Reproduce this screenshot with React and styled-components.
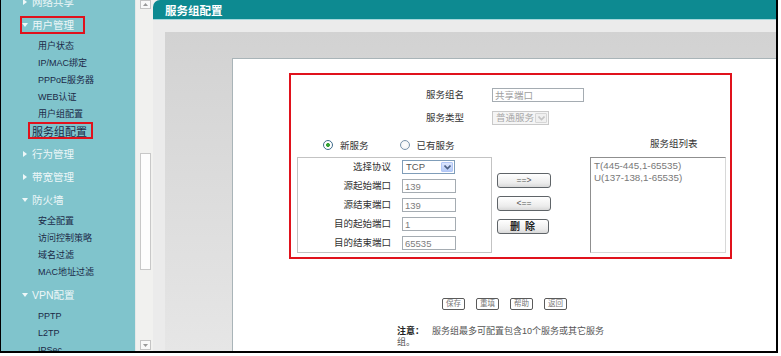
import React from 'react';
import styled, { createGlobalStyle } from 'styled-components';

const GlobalStyle = createGlobalStyle`
  html, body { margin: 0; padding: 0; background: #fff; }
  body { font-family: "Liberation Sans", "Noto Sans CJK SC", sans-serif; }
  * { box-sizing: border-box; }
`;

const RED = '#e0121c';

const Frame = styled.div`
  display: flex;
  width: 778px;
  height: 353px;
  border-left: 1px solid #000;
  border-right: 2px solid #000;
  border-bottom: 2px solid #000;
  overflow: hidden;
`;

/* ---------- sidebar ---------- */

const Sidebar = styled.nav`
  width: 134px;
  flex: none;
  background: #80c4cc;
  overflow: hidden;
`;

const MenuList = styled.div`
  margin-top: -10px;
`;

const GroupTitle = styled.div`
  height: 23px;
  display: flex;
  align-items: center;
  padding-left: 19px;
`;

const TitleBox = styled.span`
  display: inline-flex;
  align-items: center;
  height: 18px;
  padding: 0 9px 0 0;
  border: 2px solid ${p => (p.$marked ? RED : 'transparent')};
  color: #eef7f8;
  font-size: 10.5px;
  white-space: nowrap;
`;

const ArrowSlot = styled.span`
  width: 6px;
  margin-right: 4px;
  display: inline-flex;
  justify-content: center;
`;

const SubList = styled.div`
  padding: 1px 0 3px;
`;

const SubItem = styled.div`
  height: 17px;
  display: flex;
  align-items: center;
  padding-left: ${p => (p.$marked ? 27 : 37)}px;
`;

const SubLabel = styled.span`
  display: inline-flex;
  align-items: center;
  color: #1b2947;
  white-space: nowrap;
  font-size: ${p => (p.$marked ? 11 : 9)}px;
  height: ${p => (p.$marked ? '17px' : 'auto')};
  padding: ${p => (p.$marked ? '0 4px 0 2px' : '0')};
  border: ${p => (p.$marked ? `2px solid ${RED}` : 'none')};
`;

const Arrow = ({ open }) =>
  open ? (
    <svg width="6" height="4" viewBox="0 0 6 4"><path d="M0 0H6L3 4Z" fill="#eef7f8" /></svg>
  ) : (
    <svg width="4" height="6" viewBox="0 0 4 6"><path d="M0 0L4 3L0 6Z" fill="#eef7f8" /></svg>
  );

const menu = [
  { title: '网络共享', items: [] },
  { title: '用户管理', open: true, marked: true, items: ['用户状态', 'IP/MAC绑定', 'PPPoE服务器', 'WEB认证', '用户组配置', '服务组配置'] },
  { title: '行为管理', items: [] },
  { title: '带宽管理', items: [] },
  { title: '防火墙', open: true, items: ['安全配置', '访问控制策略', '域名过滤', 'MAC地址过滤'] },
  { title: 'VPN配置', open: true, items: ['PPTP', 'L2TP', 'IPSec'] },
];

/* ---------- scrollbar ---------- */

const ScrollTrack = styled.div`
  width: 18px;
  flex: none;
  background: #f1f1ef;
  border-left: 1px solid #e4e8e8;
  display: flex;
  flex-direction: column;
  padding-left: 4px;
`;

const ScrollBtn = styled.div`
  width: 11px;
  height: ${p => p.$h}px;
  border: 1px solid #c4c4c4;
  background: #f9f9f9;
  display: flex;
  align-items: center;
  justify-content: center;
  margin-top: ${p => (p.$bottom ? 'auto' : '0')};
  margin-bottom: ${p => (p.$bottom ? '1px' : '0')};
`;

const Thumb = styled.div`
  width: 11px;
  height: 117px;
  margin-top: 144px;
  border: 1px solid #c8c8c8;
  background: #fdfdfd;
`;

/* ---------- main ---------- */

const Main = styled.main`
  flex: 1;
  display: flex;
  flex-direction: column;
  background: #f1f1ef;
  min-width: 0;
`;

const TitleBar = styled.header`
  height: 20px;
  flex: none;
  background: #0d8a91;
  border-top-left-radius: 7px;
  border-bottom: 1px solid #a6d8dc;
  display: flex;
  align-items: center;
  padding-left: 12px;
  color: #fff;
  font-weight: bold;
  font-size: 11.5px;
`;

const Body = styled.div`
  flex: 1;
  display: flex;
  background: #ebebeb;
  padding: 12px 0 0 12px;
`;

const Inset = styled.div`
  flex: 1;
  display: flex;
  background: linear-gradient(#d2d2d2, #e6e6e6);
  padding: 26px 0 0 67px;
`;

const Content = styled.section`
  flex: 1;
  background: #fff;
  border-top: 1px solid #a9b4b8;
  border-left: 1px solid #a9b4b8;
  display: flex;
  flex-direction: column;
`;

const RedBox = styled.div`
  margin: 14px 0 0 56px;
  width: 443px;
  height: 186px;
  border: 2px solid ${RED};
  flex: none;
`;

const TopGrid = styled.div`
  display: grid;
  grid-template-columns: 173px auto;
  column-gap: 28px;
  row-gap: 9px;
  padding-top: 13px;
  justify-content: start;
`;

const Label = styled.span`
  font-size: 9.5px;
  color: #333;
  line-height: 14px;
  text-align: ${p => p.$align || 'right'};
  white-space: nowrap;
`;

const TextBox = styled.input`
  width: ${p => p.$w}px;
  height: 14px;
  border: 1px solid #a5acb2;
  padding: 0 2px;
  margin: 0;
  font: 9.5px "Liberation Sans", "Noto Sans CJK SC", sans-serif;
  color: ${p => p.$faint ? '#a0a0a0' : '#7d7d7d'};
  background: #fff;
  outline: none;
`;

const SelectBox = styled.div`
  width: ${p => p.$w}px;
  height: ${p => p.$h || 14}px;
  border: 1px solid ${p => (p.$disabled ? '#c9c9c9' : '#7f9db9')};
  background: ${p => (p.$disabled ? '#f5f5f5' : '#fff')};
  display: flex;
  align-items: stretch;
  font-size: 9.5px;
  color: ${p => (p.$disabled ? '#a8a8a8' : '#555')};
`;

const SelectText = styled.span`
  flex: 1;
  padding-left: 3px;
  line-height: 12px;
  white-space: nowrap;
  overflow: hidden;
`;

const SelectArrow = styled.span`
  width: 12px;
  flex: none;
  margin: 1px;
  display: flex;
  align-items: center;
  justify-content: center;
  border: 1px solid ${p => (p.$disabled ? '#d6d6d6' : '#b1c6f6')};
  background: ${p => (p.$disabled ? '#f0f0f0' : 'linear-gradient(#dce6fd, #b6cbf8)')};
  border-radius: 1px;
`;

const Chevron = ({ color }) => (
  <svg width="7" height="5" viewBox="0 0 7 5">
    <path d="M0.5 0.5L3.5 3.5L6.5 0.5" fill="none" stroke={color} strokeWidth="1.6" />
  </svg>
);

const Lower = styled.div`
  display: flex;
  margin-top: 13px;
`;

const LeftCol = styled.div`
  margin-left: 6px;
  width: 195px;
  flex: none;
`;

const RadioRow = styled.div`
  height: 14px;
  display: flex;
  align-items: center;
  padding-left: 26px;
`;

const Radio = styled.span`
  width: 10px;
  height: 10px;
  border-radius: 50%;
  border: 1px solid ${p => (p.$on ? '#3f6c8c' : '#7a93ab')};
  background: radial-gradient(circle, ${p => (p.$on ? '#37a437 0 1.8px, #fff 2.2px' : '#fff 0, #eef0f2 100%')});
  margin-right: 7px;
  flex: none;
`;

const RadioText = styled.span`
  font-size: 9.5px;
  color: #333;
  margin-right: ${p => p.$gap || 0}px;
  white-space: nowrap;
`;

const FieldSet = styled.div`
  margin-top: 5px;
  height: 96px;
  border: 1px solid #c3c3c3;
  padding-top: 2px;
  display: grid;
  grid-template-columns: 93px auto;
  column-gap: 11px;
  row-gap: 5px;
  grid-auto-rows: 14px;
  justify-content: start;
`;

const BtnCol = styled.div`
  margin-left: 5px;
  width: 54px;
  flex: none;
  padding-top: 35px;
  display: flex;
  flex-direction: column;
  gap: 8px;
`;

const XpButton = styled.button`
  width: ${p => p.$w || 54}px;
  height: 15px;
  margin: 0;
  padding: 0;
  border: 1px solid #5f6468;
  border-radius: 3px;
  background: linear-gradient(#ffffff, #ececec 70%, #d8d8d8);
  font: ${p => (p.$bold ? 'bold 10px' : '8.5px')} "Liberation Sans", "Noto Sans CJK SC", sans-serif;
  color: ${p => (p.$bold ? '#222' : '#555')};
  line-height: 13px;
  letter-spacing: ${p => (p.$bold ? '1px' : '0')};
`;

const RightCol = styled.div`
  margin-left: 39px;
  width: 136px;
  flex: none;
`;

const ListTitle = styled.div`
  height: 14px;
  line-height: 12px;
  padding-left: 60px;
  font-size: 9.5px;
  color: #333;
`;

const ListBox = styled.div`
  margin-top: 5px;
  height: 96px;
  border: 1px solid #d8d8d8;
  border-top-color: #8f8f8f;
  border-left-color: #8f8f8f;
  padding: 2px 3px;
  font-size: 9.8px;
  line-height: 11.5px;
  color: #787878;
`;

const Actions = styled.div`
  display: flex;
  gap: 11px;
  margin: 39px 0 0 209px;
`;

const SmallBtn = styled.button`
  width: 23px;
  height: 12px;
  margin: 0;
  padding: 0;
  border: 1px solid #5a5a5a;
  border-radius: 2px;
  background: #fff;
  font: 7.5px "Liberation Sans", "Noto Sans CJK SC", sans-serif;
  color: #777;
  line-height: 10px;
`;

const Note = styled.p`
  margin: 16px 0 0 164px;
  width: 210px;
  font-size: 9px;
  line-height: 10.5px;
  color: #555;
`;

const NoteHead = styled.b`
  color: #222;
  margin-right: 8px;
`;

export default function App() {
  return (
    <>
      <GlobalStyle />
      <Frame>
        <Sidebar>
          <MenuList>
            {menu.map(g => (
              <div key={g.title}>
                <GroupTitle>
                  <TitleBox $marked={g.marked}>
                    <ArrowSlot><Arrow open={g.open} /></ArrowSlot>
                    {g.title}
                  </TitleBox>
                </GroupTitle>
                {g.items.length > 0 && (
                  <SubList>
                    {g.items.map(it => (
                      <SubItem key={it} $marked={it === '服务组配置'}>
                        <SubLabel $marked={it === '服务组配置'}>{it}</SubLabel>
                      </SubItem>
                    ))}
                  </SubList>
                )}
              </div>
            ))}
          </MenuList>
        </Sidebar>

        <ScrollTrack>
          <ScrollBtn $h={9}>
            <svg width="5" height="3" viewBox="0 0 5 3"><path d="M0 3L2.5 0L5 3Z" fill="#999" /></svg>
          </ScrollBtn>
          <Thumb />
          <ScrollBtn $h={10} $bottom>
            <svg width="5" height="3" viewBox="0 0 5 3"><path d="M0 0L2.5 3L5 0Z" fill="#999" /></svg>
          </ScrollBtn>
        </ScrollTrack>

        <Main>
          <TitleBar>服务组配置</TitleBar>
          <Body>
            <Inset>
              <Content>
                <RedBox>
                  <TopGrid>
                    <Label>服务组名</Label>
                    <TextBox $w={92} $faint readOnly value="共享端口" />
                    <Label>服务类型</Label>
                    <SelectBox $w={57} $disabled>
                      <SelectText>普通服务</SelectText>
                      <SelectArrow $disabled><Chevron color="#c4c4c4" /></SelectArrow>
                    </SelectBox>
                  </TopGrid>

                  <Lower>
                    <LeftCol>
                      <RadioRow>
                        <Radio $on />
                        <RadioText $gap={31}>新服务</RadioText>
                        <Radio />
                        <RadioText>已有服务</RadioText>
                      </RadioRow>
                      <FieldSet>
                        <Label>选择协议</Label>
                        <SelectBox $w={53}>
                          <SelectText>TCP</SelectText>
                          <SelectArrow><Chevron color="#4d6185" /></SelectArrow>
                        </SelectBox>
                        <Label>源起始端口</Label>
                        <TextBox $w={54} readOnly value="139" />
                        <Label>源结束端口</Label>
                        <TextBox $w={54} readOnly value="139" />
                        <Label>目的起始端口</Label>
                        <TextBox $w={54} readOnly value="1" />
                        <Label>目的结束端口</Label>
                        <TextBox $w={54} readOnly value="65535" />
                      </FieldSet>
                    </LeftCol>

                    <BtnCol>
                      <XpButton>==&gt;</XpButton>
                      <XpButton>&lt;==</XpButton>
                      <XpButton $w={52} $bold>删 除</XpButton>
                    </BtnCol>

                    <RightCol>
                      <ListTitle>服务组列表</ListTitle>
                      <ListBox>
                        <div>T(445-445,1-65535)</div>
                        <div>U(137-138,1-65535)</div>
                      </ListBox>
                    </RightCol>
                  </Lower>
                </RedBox>

                <Actions>
                  <SmallBtn>保存</SmallBtn>
                  <SmallBtn>重填</SmallBtn>
                  <SmallBtn>帮助</SmallBtn>
                  <SmallBtn>返回</SmallBtn>
                </Actions>

                <Note>
                  <NoteHead>注意：</NoteHead>
                  服务组最多可配置包含10个服务或其它服务组。
                </Note>
              </Content>
            </Inset>
          </Body>
        </Main>
      </Frame>
    </>
  );
}
